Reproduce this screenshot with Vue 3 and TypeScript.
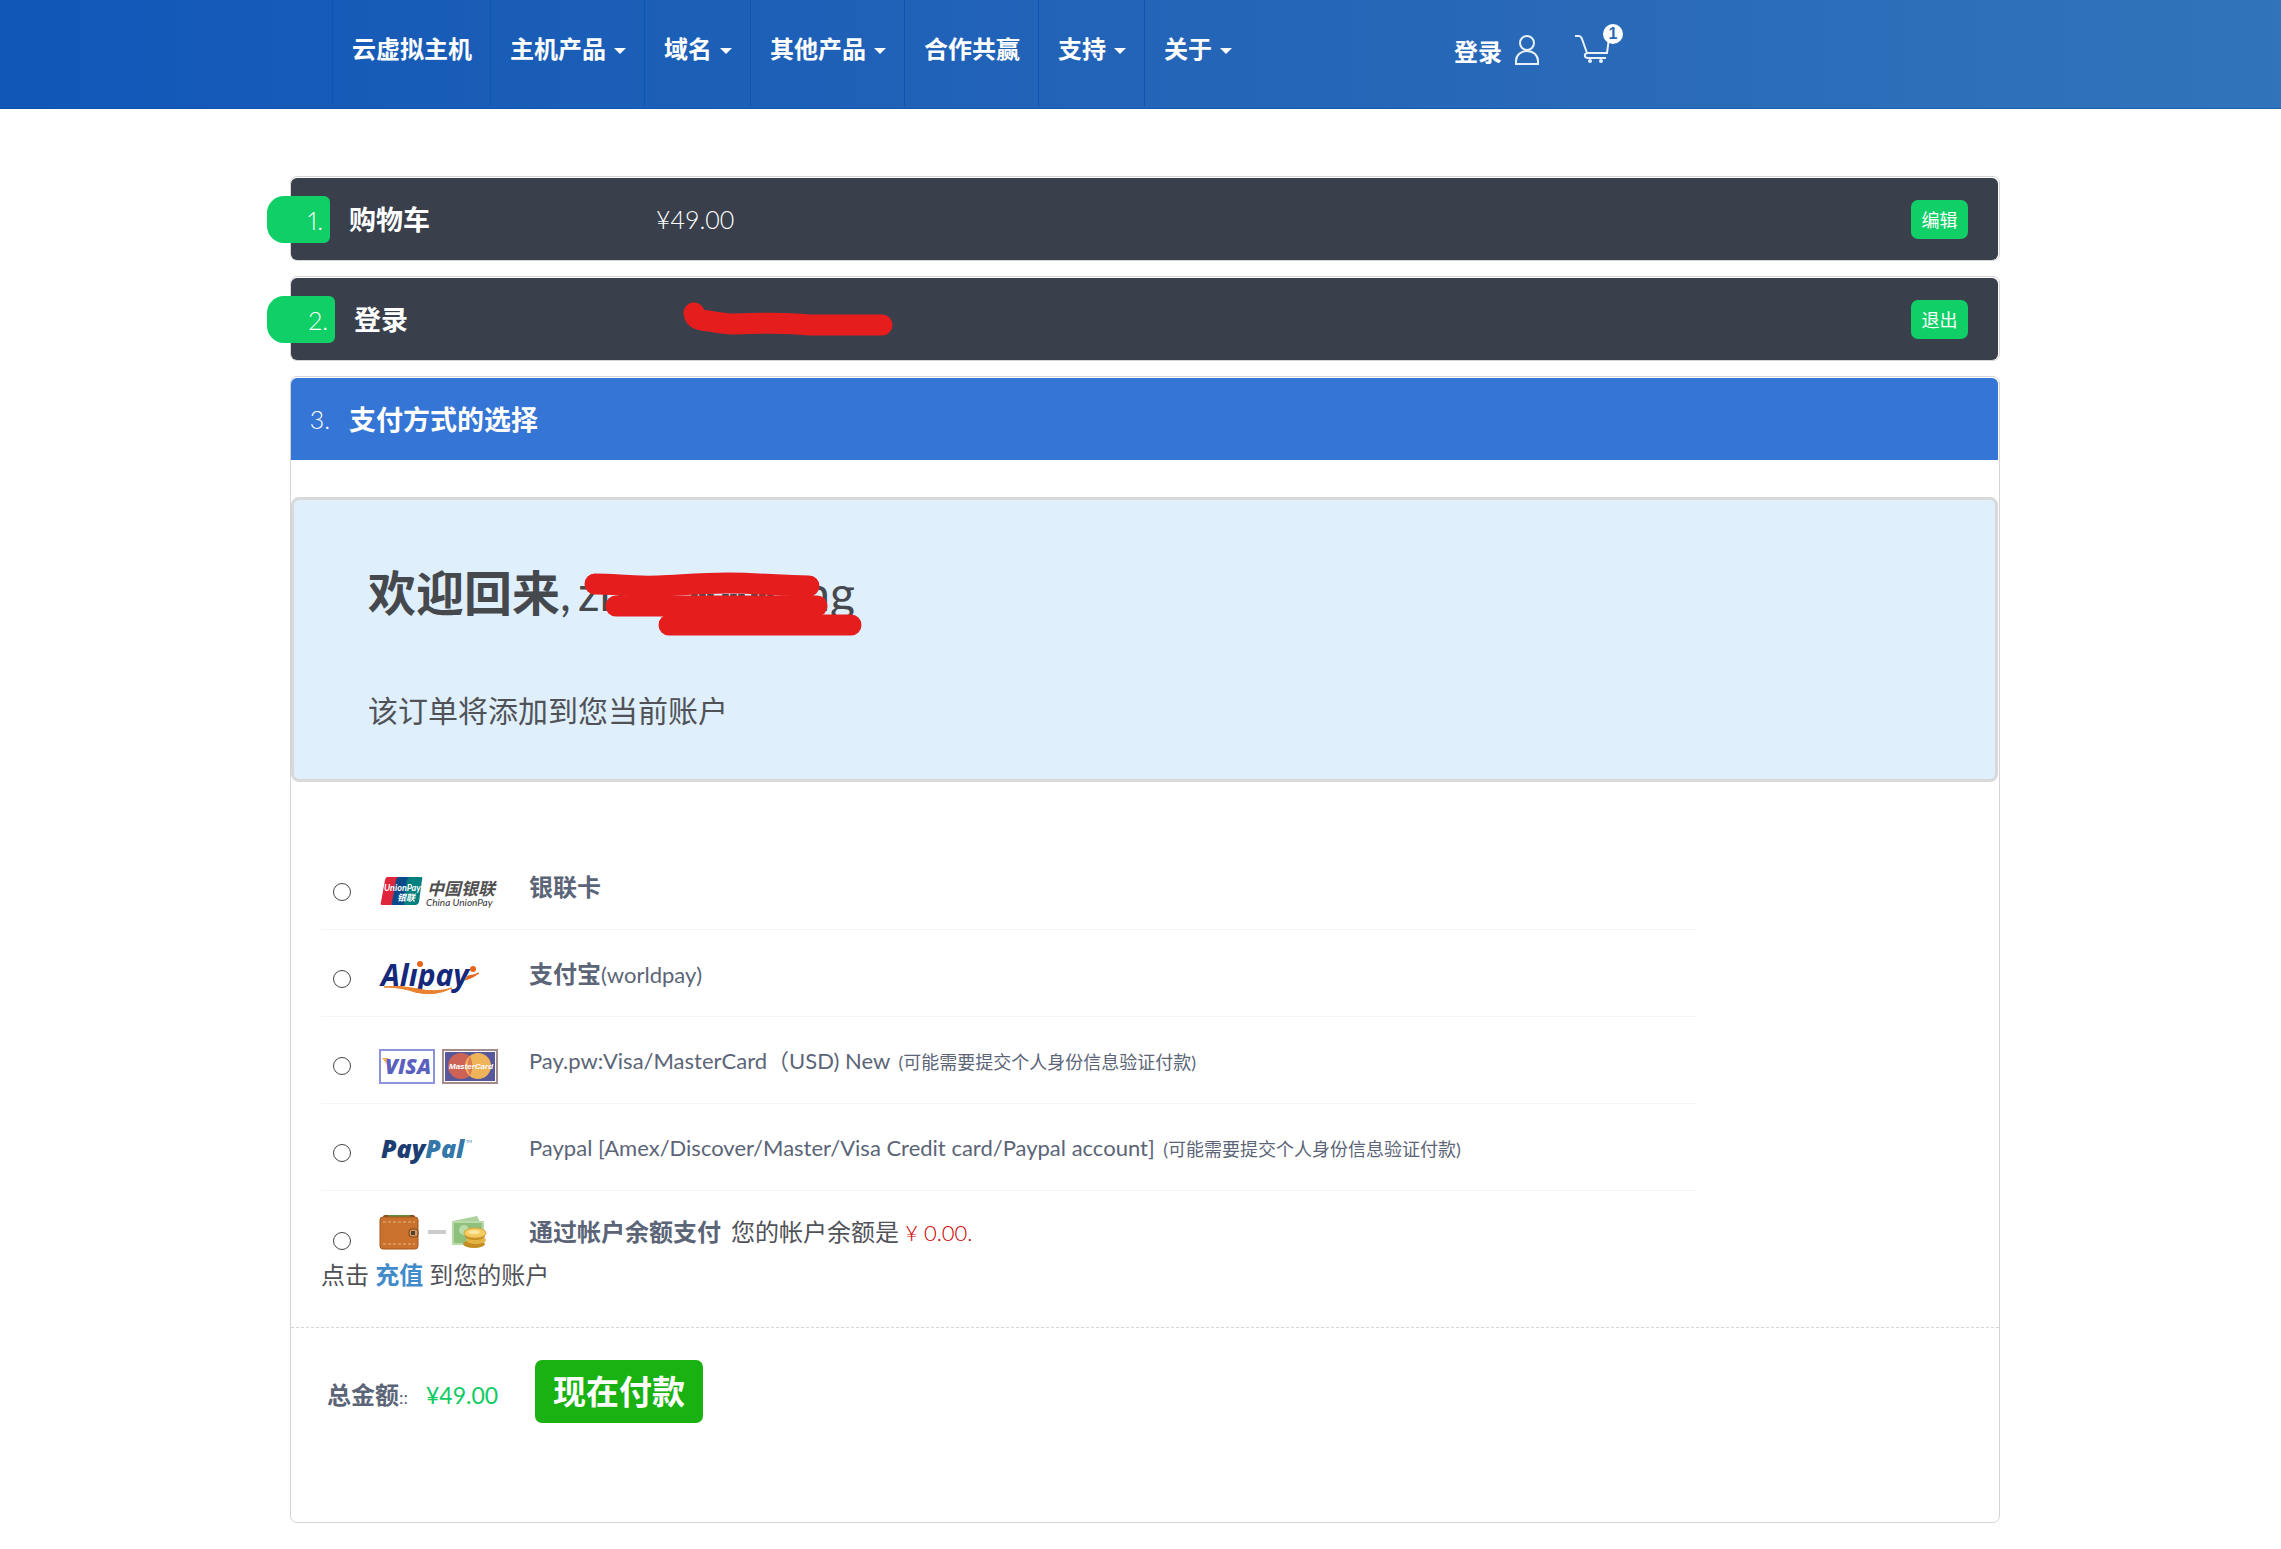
<script setup lang="ts">
import { ref } from 'vue'

interface NavItem {
  label: string
  menu: boolean
}

const navItems: NavItem[] = [
  { label: '云虚拟主机', menu: false },
  { label: '主机产品', menu: true },
  { label: '域名', menu: true },
  { label: '其他产品', menu: true },
  { label: '合作共赢', menu: false },
  { label: '支持', menu: true },
  { label: '关于', menu: true },
]

const note = '(可能需要提交个人身份信息验证付款)'
const method = ref('')
</script>

<template>
  <div class="page">
    <header class="header">
      <nav class="nav">
        <a v-for="item in navItems" :key="item.label" href="#" class="nav-item">
          {{ item.label }}<span v-if="item.menu" class="caret"></span>
        </a>
      </nav>
      <a href="#" class="login">
        <span>登录</span>
        <svg width="24" height="30" viewBox="0 0 24 30" fill="none" stroke="#e8f0fa" stroke-width="2">
          <circle cx="12" cy="8" r="7" />
          <path d="M1 29V26C1 20 6 16 12 16S23 20 23 26V29Z" />
        </svg>
      </a>
      <a href="#" class="cart" aria-label="购物车">
        <svg width="36" height="30" viewBox="0 0 36 30" fill="none" stroke="#e8f0fa" stroke-width="2">
          <path d="M0 2H4C6 2 6 3 7 5L12 19H32L34 4M12 19C9 20 9 24 13 24H31" />
          <circle cx="15" cy="27" r="2" fill="#e8f0fa" stroke="none" />
          <circle cx="26" cy="27" r="2" fill="#e8f0fa" stroke="none" />
        </svg>
        <span class="badge">1</span>
      </a>
    </header>

    <main class="main">
      <section class="card">
        <div class="bar">
          <span class="tab tab-one">1.</span>
          <h2 class="bar-title">购物车</h2>
          <span class="bar-price">¥49.00</span>
          <button type="button" class="small-button">编辑</button>
        </div>
      </section>

      <section class="card">
        <div class="bar">
          <span class="tab tab-two">2.</span>
          <h2 class="bar-title">登录</h2>
          <svg class="account-mark" width="212" height="36" viewBox="0 0 212 36" fill="none" stroke="#e61d1d" stroke-width="21" stroke-linecap="round" stroke-linejoin="round">
            <path d="M12 12C13 19 19 19 27 20C38 22 44 23 52 23C80 22 100 22 114 23L128 24H200" />
          </svg>
          <button type="button" class="small-button">退出</button>
        </div>
      </section>

      <section class="card">
        <div class="bar bar-active">
          <span class="step">3.</span>
          <h2 class="bar-title">支付方式的选择</h2>
        </div>

        <div class="welcome">
          <h1 class="welcome-title">
            <span><b>欢迎回来</b>,</span>
            <span class="user"><span>zh</span><span>ng</span>
              <svg class="user-mark" width="284" height="66" viewBox="0 0 284 66" fill="none" stroke="#e61d1d" stroke-width="21" stroke-linecap="round" stroke-linejoin="round">
                <path d="M114 23H135M145 23H168M174 23H198" stroke="#45484d" stroke-width="2" stroke-dasharray="5 3" />
                <path d="M17 12C40 12 50 15 80 14C105 13 120 11 150 11C185 11 200 14 231 14" />
                <path d="M38 34H239" />
                <path d="M91 53H273" />
              </svg>
            </span>
          </h1>
          <p class="welcome-text">该订单将添加到您当前账户</p>
        </div>

        <form class="methods" @submit.prevent>
          <label class="method">
            <input v-model="method" type="radio" name="method" value="unionpay" />
            <svg class="logo" width="120" height="36" viewBox="0 0 120 36">
              <path d="M8 3H20L14 31H3Q1 31 2 28L6 6Q7 3 8 3Z" fill="#e0263a" />
              <path d="M19 3H31L26 31H14Q12 31 13 28L17 6Q18 3 19 3Z" fill="#0b4a8a" />
              <path d="M31 3H42Q44 3 43 6L40 28Q39 31 37 31H26Q24 31 25 28L28 6Q29 3 31 3Z" fill="#00807f" />
              <text x="5" y="17" font-size="9" font-weight="700" font-style="italic" fill="#fff">UnionPay</text>
              <text x="18" y="27" font-size="9" font-weight="700" font-style="italic" fill="#fff">银联</text>
              <text x="48" y="21" font-size="17" font-weight="700" font-style="italic" fill="#505050">中国银联</text>
              <text x="47" y="32" font-size="10" font-style="italic" fill="#333">China UnionPay</text>
            </svg>
            <span class="method-text"><b>银联卡</b></span>
          </label>

          <label class="method">
            <input v-model="method" type="radio" name="method" value="alipay" />
            <svg class="logo" width="120" height="36" viewBox="0 0 120 36">
              <text x="2" y="25" class="alipay-word">Alıpay</text>
              <circle cx="41" cy="3" r="3" fill="#e8641b" />
              <circle cx="94" cy="8" r="3" fill="#e8641b" />
              <path d="M86 19Q94 17 100 12Q96 14 89 15Z" fill="#e8641b" stroke="#e8641b" />
              <path d="M5 26Q22 26 36 31Q55 36 73 27Q56 32 39 28Q22 24 5 26Z" fill="#e8822f" stroke="#e8822f" />
            </svg>
            <span class="method-text"><b>支付宝</b>(worldpay)</span>
          </label>

          <label class="method">
            <input v-model="method" type="radio" name="method" value="card" />
            <svg class="logo" width="120" height="36" viewBox="0 0 120 36">
              <rect x="1" y="2" width="54" height="33" fill="#fff" stroke="#8d93dc" stroke-width="2" />
              <path d="M3 10H9L14 24Z" fill="#f0b04a" />
              <text x="6" y="26" class="visa-word">VISA</text>
              <rect x="64" y="2" width="54" height="33" fill="#fff" stroke="#a58a8e" stroke-width="2" />
              <rect x="66" y="4" width="50" height="29" fill="#57579a" />
              <circle cx="82" cy="18" r="13" fill="#cd6357" />
              <circle cx="99" cy="18" r="13" fill="#efb45a" />
              <path d="M91 8Q86 18 91 28Q96 18 91 8Z" fill="#dd7c55" />
              <text x="70" y="21" class="master-word">MasterCard</text>
            </svg>
            <span class="method-text">Pay.pw:Visa/MasterCard（USD) New <small>{{ note }}</small></span>
          </label>

          <label class="method">
            <input v-model="method" type="radio" name="method" value="paypal" />
            <svg class="logo" width="120" height="36" viewBox="0 0 120 36">
              <text x="2" y="23" class="paypal-word"><tspan fill="#1c3c72">Pay</tspan><tspan fill="#3577a8">Pal</tspan></text>
              <text x="87" y="8" font-size="4" fill="#3577a8">TM</text>
            </svg>
            <span class="method-text">Paypal [Amex/Discover/Master/Visa Credit card/Paypal account] <small>{{ note }}</small></span>
          </label>

          <div class="method method-last">
            <input id="balance" v-model="method" type="radio" name="method" value="balance" />
            <svg class="logo" width="120" height="36" viewBox="0 0 120 36">
              <rect x="4" y="1" width="32" height="8" rx="2" fill="#8a4a20" />
              <rect x="9" y="1" width="22" height="4" fill="#5f8f3c" />
              <rect x="1" y="3" width="38" height="32" rx="3" fill="#c9722d" stroke="#a8561f" />
              <path d="M4 8H36M4 30H36" stroke="#eeb27a" stroke-dasharray="3 2" />
              <rect x="30" y="15" width="9" height="8" rx="3" fill="#d8995a" stroke="#7c4018" />
              <rect x="32" y="17" width="4" height="4" fill="#4a4132" />
              <rect x="49" y="16" width="18" height="4" fill="#ccc" />
              <path d="M74 7L98 2L102 10V28L74 30Z" fill="#acd19b" />
              <path d="M74 8H104V30H74Z" fill="#8fc17d" stroke="#b8dba9" stroke-width="2" />
              <circle cx="85" cy="16" r="5" fill="#b9dba9" />
              <ellipse cx="95" cy="30" rx="11" ry="4" fill="#c58c22" />
              <ellipse cx="97" cy="26" rx="10" ry="4" fill="#e4b543" />
              <ellipse cx="96" cy="22" rx="10" ry="4" fill="#c58c22" />
              <ellipse cx="96" cy="19" rx="11" ry="5" fill="#f3cd62" stroke="#d7a437" />
              <ellipse cx="95" cy="18" rx="6" ry="2" fill="#fae69e" />
            </svg>
            <div class="method-text">
              <label for="balance"><b>通过帐户余额支付</b></label>
              <span class="balance">您的帐户余额是 <em>¥ 0.00.</em></span>
            </div>
          </div>
          <p class="recharge">点击 <a href="#">充值</a> 到您的账户</p>
        </form>

        <div class="total">
          <span class="total-label"><b>总金额</b>::</span>
          <span class="total-price">¥49.00</span>
          <button type="button" class="pay-button">现在付款</button>
        </div>
      </section>
    </main>
  </div>
</template>

<style>
body {
  margin: 0;
  background: #fff;
}
</style>

<style scoped>
* {
  box-sizing: border-box;
}

.page {
  font-family: Lato, 'Noto Sans CJK SC', sans-serif;
  font-size: 24px;
  line-height: 34px;
  color: #505257;
}

a {
  text-decoration: none;
}

h1,
h2,
p {
  margin: 0;
}

button {
  border: 0;
  color: #fff;
  font-family: inherit;
  cursor: pointer;
}

/* Header */
.header {
  display: flex;
  height: 109px;
  padding-left: 332px;
  background: linear-gradient(to right, #1157b8, #1c5fb7 30%, #2868b8 65%, #3174bb);
  border-bottom: 1px solid rgba(0, 70, 170, 0.4);
}

.nav {
  display: flex;
  height: 106px;
}

.nav-item {
  display: flex;
  align-items: center;
  padding: 0 18px 8px 19px;
  border-left: 1px solid #0f53b1;
  color: #fff;
  font-weight: 700;
  white-space: nowrap;
}

.caret {
  margin: 4px 0 0 8px;
  border: 6px solid transparent;
  border-top-color: #fff;
  border-bottom: 0;
}

.login {
  display: flex;
  align-items: center;
  gap: 13px;
  height: 100px;
  margin-left: 204px;
  color: #fff;
  font-weight: 700;
}

.login span {
  padding-top: 4px;
}

.cart {
  position: relative;
  height: 30px;
  margin: 34px 0 0 36px;
}

.cart svg {
  display: block;
}

.badge {
  position: absolute;
  top: -10px;
  left: 28px;
  width: 20px;
  height: 20px;
  border-radius: 50%;
  background: #fff;
  color: #2868b8;
  font: 700 16px/20px 'Liberation Sans', sans-serif;
  text-align: center;
}

/* Checkout steps */
.main {
  display: flex;
  flex-direction: column;
  gap: 15px;
  padding: 67px 281px 27px 290px;
}

.card {
  padding-top: 1px;
  border: 1px solid #d5d5d7;
  border-radius: 7px;
}

.bar {
  display: flex;
  align-items: center;
  height: 82px;
  margin-right: 1px;
  padding-right: 30px;
  border-radius: 6px;
  background: #39404c;
  color: #fff;
}

.bar-active {
  border-radius: 6px 6px 0 0;
  background: #3575d5;
}

.tab,
.step {
  font-size: 25px;
  font-weight: 300;
  font-variant-numeric: proportional-nums;
  text-align: right;
}

.tab {
  height: 47px;
  margin-left: -24px;
  padding-right: 7px;
  border-radius: 17px 6px 6px 17px;
  background: #0fcf66;
  line-height: 48px;
}

.tab-one {
  width: 63px;
}

.tab-two {
  width: 68px;
}

.step {
  width: 39px;
}

.bar-title {
  width: 307px;
  margin-left: 19px;
  padding-top: 2px;
  font-size: 27px;
  font-weight: 700;
}

.bar-price {
  font-size: 25px;
  font-weight: 300;
}

.account-mark {
  margin-left: 21px;
}

.small-button {
  width: 57px;
  height: 39px;
  margin-left: auto;
  padding: 0;
  border-radius: 7px;
  background: #0fcf66;
  font-size: 18px;
}

/* Welcome panel */
.welcome {
  height: 285px;
  margin: 37px 1px 0 0;
  padding: 59px 74px 0;
  border: 3px solid #d9d9d9;
  border-radius: 8px;
  background: #dfeffc;
}

.welcome-title {
  display: flex;
  gap: 7px;
  color: #45484d;
  font-size: 48px;
  font-weight: 400;
  line-height: 68px;
}

.user {
  display: flex;
  position: relative;
  justify-content: space-between;
  width: 277px;
}

.user-mark {
  position: absolute;
  top: 13px;
  left: 0;
}

.welcome-text {
  margin-top: 61px;
  font-size: 30px;
  line-height: 44px;
}

/* Payment methods */
.methods {
  padding: 61px 30px 0;
}

.method {
  display: flex;
  align-items: center;
  width: 1376px;
  max-width: 100%;
  height: 87px;
  padding: 12px 0 0 12px;
  border-bottom: 1px solid #f5f5f5;
  color: #5b6577;
  font-size: 22px;
}

.method input {
  flex: none;
  appearance: none;
  width: 18px;
  height: 18px;
  margin: 0;
  border: 1px solid #444;
  border-radius: 50%;
  background: #fff;
}

.method input:checked {
  border: 5px solid #3575d5;
}

.logo {
  flex: none;
  margin: 0 30px 0 28px;
  overflow: visible;
}

.method b {
  font-size: 24px;
}

.method-text {
  margin-bottom: 10px;
  white-space: nowrap;
}

.method small {
  margin-left: 3px;
  font-size: 18px;
}

.method-last {
  align-items: flex-end;
  height: 67px;
  padding: 0 0 8px 12px;
  border: 0;
}

.method-last .method-text {
  margin: 0;
}

.balance {
  margin-left: 10px;
  color: #505257;
  font-size: 24px;
}

.balance em {
  color: #c00;
  font-size: 22px;
  font-style: normal;
  font-weight: 300;
}

.alipay-word {
  fill: #14287c;
  font: italic 700 30px 'Open Sans', sans-serif;
}

.visa-word {
  fill: #5a5fc0;
  font: italic 800 21px 'Open Sans', sans-serif;
}

.master-word {
  fill: #fff;
  font: italic 700 8px 'Liberation Sans', sans-serif;
}

.paypal-word {
  font: italic 800 25px 'Open Sans', sans-serif;
}

.recharge a {
  color: #428bca;
  font-weight: 700;
}

/* Total */
.total {
  display: flex;
  align-items: flex-start;
  height: 195px;
  margin-top: 35px;
  padding: 32px 36px 0;
  border-top: 1px dashed #d5d5d7;
}

.total-label {
  width: 99px;
  padding-top: 18px;
  color: #5b6577;
}

.total-label b {
  font-size: 24px;
}

.total-label {
  font-size: 18px;
}

.total-price {
  width: 109px;
  padding-top: 18px;
  color: #0fcb64;
  font-size: 23px;
}

.pay-button {
  width: 168px;
  height: 63px;
  padding: 0;
  border-radius: 7px;
  background: #1ab212;
  font-size: 33px;
  font-weight: 700;
  line-height: 63px;
}
</style>
